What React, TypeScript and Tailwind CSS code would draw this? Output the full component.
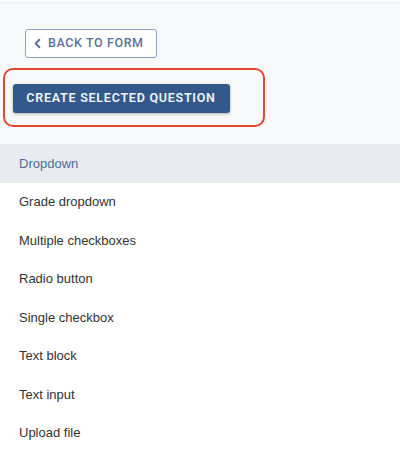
import { ChevronLeft } from "lucide-react";

const questionTypes = [
  "Dropdown",
  "Grade dropdown",
  "Multiple checkboxes",
  "Radio button",
  "Single checkbox",
  "Text block",
  "Text input",
  "Upload file",
];

export default function App() {
  const selected = "Dropdown";

  return (
    <div className="h-[454px] w-[400px] overflow-hidden bg-white font-['Liberation_Sans',Arial,sans-serif]">
      <div className="h-[3px] border-b border-[#eceef2] bg-[#fbfcfd]" />

      <div className="bg-[#f7f8fa] pb-[17px] pt-[26px]">
        <button
          type="button"
          className="ml-[25px] flex h-[29px] w-[132px] items-center gap-[3px] rounded-[3px] border border-[#8ea2bf] bg-white pl-[4px] font-['Roboto',sans-serif] text-[12.5px] font-medium tracking-[0.6px] text-[#5b7396]"
        >
          <ChevronLeft className="h-[15px] w-[15px]" strokeWidth={3} />
          BACK TO FORM
        </button>

        <div className="ml-[3px] mt-[10px] h-[59px] w-[262px] rounded-[10px] border-[2.5px] border-[#e2472f] pl-[7.5px] pt-[13.5px]">
          <button
            type="button"
            className="flex h-[29px] w-[217px] items-center justify-center rounded-[3px] bg-[#33598b] font-['Roboto',sans-serif] text-[12.5px] font-semibold tracking-[0.75px] text-[#f1f4f8] shadow-[0_1px_3px_rgba(0,0,0,0.3)]"
          >
            CREATE SELECTED QUESTION
          </button>
        </div>
      </div>

      <ul>
        {questionTypes.map((type) => (
          <li
            key={type}
            className={
              type === selected
                ? "flex h-[38.5px] items-center bg-[#e8ecf0] pl-[19px] text-[13px] text-[#4d6c96]"
                : "flex h-[38.5px] items-center pl-[19px] text-[13px] text-[#333]"
            }
          >
            {type}
          </li>
        ))}
      </ul>
    </div>
  );
}
